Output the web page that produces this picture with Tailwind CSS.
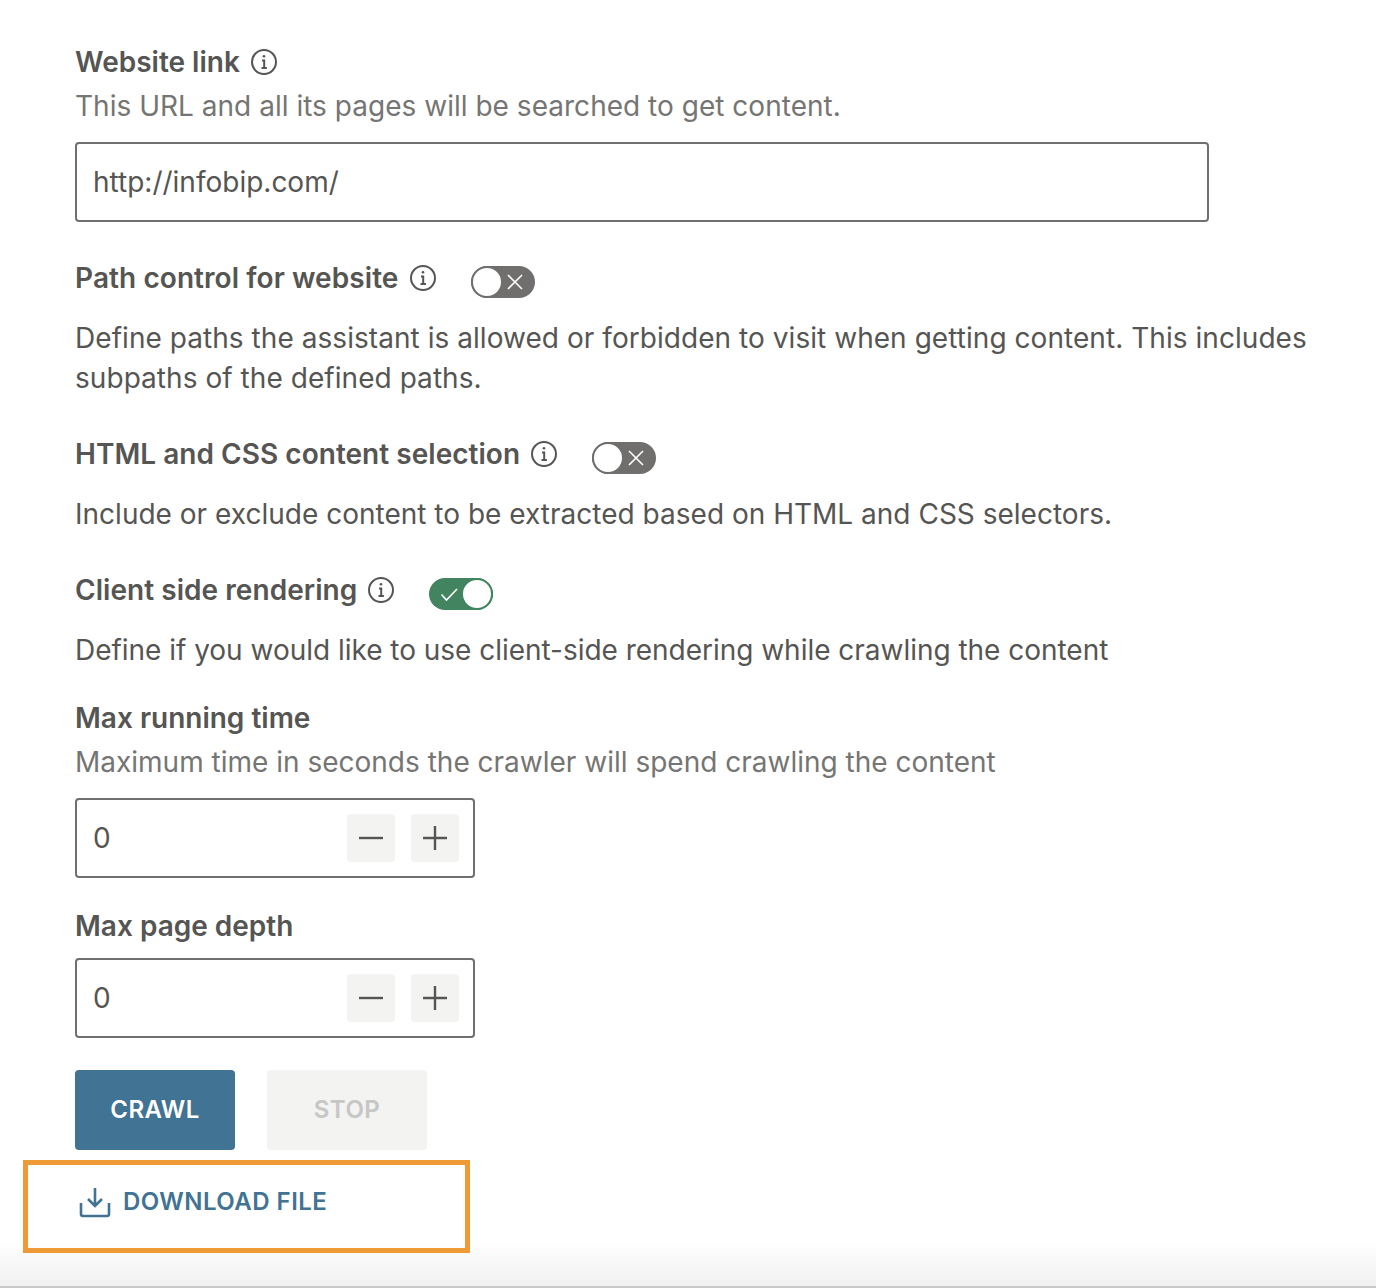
<!DOCTYPE html>
<html lang="en">
<head>
<meta charset="UTF-8" />
<title>Website crawler</title>
<script src="https://cdn.jsdelivr.net/npm/@tailwindcss/browser@4"></script>
</head>
<body class="bg-white">
<div class="relative h-[1288px] w-[1376px] overflow-hidden font-['Inter',sans-serif] text-[28px] leading-[40px] text-[#555553]">
  <main class="pl-[75px] pt-[42px] pr-[60px]">

    <!-- Website link -->
    <div class="flex h-10 items-center gap-[10px] font-semibold">
      Website link
      <svg class="h-7 w-7" viewBox="0 0 28 28" fill="none" stroke="currentColor" stroke-width="2"><circle cx="14" cy="14" r="12"/><path d="M12 12.5h2.2V20M11.5 20h5.4"/><circle cx="14" cy="8.3" r="1.3" fill="currentColor" stroke="none"/></svg>
    </div>
    <p class="mt-1 tracking-[0.02px] text-[#757573]">This URL and all its pages will be searched to get content.</p>
    <div class="mt-4 flex h-20 w-[1134px] items-center rounded-[4px] border-2 border-[#6f6f6d] px-4">http://infobip.com/</div>

    <!-- Path control -->
    <div class="mt-[36px] flex h-10 items-center font-semibold tracking-[0.07px]">
      Path control for website
      <svg class="ml-[11px] h-7 w-7" viewBox="0 0 28 28" fill="none" stroke="currentColor" stroke-width="2"><circle cx="14" cy="14" r="12"/><path d="M12 12.5h2.2V20M11.5 20h5.4"/><circle cx="14" cy="8.3" r="1.3" fill="currentColor" stroke="none"/></svg>
      <span class="relative top-[4px] ml-[34px] flex h-8 w-16 items-center justify-between rounded-full bg-[#706f6d]">
        <span class="h-8 w-8 rounded-full border-2 border-[#706f6d] bg-white"></span>
        <svg class="mr-[11px] h-[18px] w-[18px]" viewBox="0 0 18 18" stroke="#fff" stroke-width="1.6"><path d="M2 2l14 14M16 2L2 16"/></svg>
      </span>
    </div>
    <p class="mt-[20px] tracking-[0.05px]">Define paths the assistant is allowed or forbidden to visit when getting content. This includes subpaths of the defined paths.</p>

    <!-- HTML and CSS -->
    <div class="mt-[36px] flex h-10 items-center font-semibold tracking-[0.03px]">
      HTML and CSS content selection
      <svg class="ml-[10px] h-7 w-7" viewBox="0 0 28 28" fill="none" stroke="currentColor" stroke-width="2"><circle cx="14" cy="14" r="12"/><path d="M12 12.5h2.2V20M11.5 20h5.4"/><circle cx="14" cy="8.3" r="1.3" fill="currentColor" stroke="none"/></svg>
      <span class="relative top-[4px] ml-[34px] flex h-8 w-16 items-center justify-between rounded-full bg-[#706f6d]">
        <span class="h-8 w-8 rounded-full border-2 border-[#706f6d] bg-white"></span>
        <svg class="mr-[11px] h-[18px] w-[18px]" viewBox="0 0 18 18" stroke="#fff" stroke-width="1.6"><path d="M2 2l14 14M16 2L2 16"/></svg>
      </span>
    </div>
    <p class="mt-[20px] tracking-[0.01px]">Include or exclude content to be extracted based on HTML and CSS selectors.</p>

    <!-- Client side rendering -->
    <div class="mt-[36px] flex h-10 items-center font-semibold tracking-[0.05px]">
      Client side rendering
      <svg class="ml-[10px] h-7 w-7" viewBox="0 0 28 28" fill="none" stroke="currentColor" stroke-width="2"><circle cx="14" cy="14" r="12"/><path d="M12 12.5h2.2V20M11.5 20h5.4"/><circle cx="14" cy="8.3" r="1.3" fill="currentColor" stroke="none"/></svg>
      <span class="relative top-[4px] ml-[34px] flex h-8 w-16 items-center justify-between rounded-full bg-[#41845f]">
        <svg class="ml-[11px] h-[18px] w-[18px]" viewBox="0 0 18 18" fill="none" stroke="#fff" stroke-width="1.6"><path d="M1.5 9.5l5 5.5L17 4"/></svg>
        <span class="h-8 w-8 rounded-full border-2 border-[#41845f] bg-white"></span>
      </span>
    </div>
    <p class="mt-[20px] tracking-[-0.025px]">Define if you would like to use client-side rendering while crawling the content</p>

    <!-- Max running time -->
    <div class="mt-[28px] h-10 font-semibold">Max running time</div>
    <p class="mt-1 text-[#757573]">Maximum time in seconds the crawler will spend crawling the content</p>
    <div class="mt-4 flex h-20 w-[400px] items-center rounded-[4px] border-2 border-[#6f6f6d] pl-4 pr-[14px]">
      <span class="flex-1">0</span>
      <span class="flex h-12 w-12 items-center justify-center rounded-[4px] bg-[#f3f3f2]"><svg class="h-6 w-6" viewBox="0 0 24 24" stroke="#555553" stroke-width="2.4"><path d="M0 12h24"/></svg></span>
      <span class="ml-4 flex h-12 w-12 items-center justify-center rounded-[4px] bg-[#f3f3f2]"><svg class="h-6 w-6" viewBox="0 0 24 24" stroke="#555553" stroke-width="2.4"><path d="M0 12h24M12 0v24"/></svg></span>
    </div>

    <!-- Max page depth -->
    <div class="mt-[28px] h-10 font-semibold">Max page depth</div>
    <div class="mt-[12px] flex h-20 w-[400px] items-center rounded-[4px] border-2 border-[#6f6f6d] pl-4 pr-[14px]">
      <span class="flex-1">0</span>
      <span class="flex h-12 w-12 items-center justify-center rounded-[4px] bg-[#f3f3f2]"><svg class="h-6 w-6" viewBox="0 0 24 24" stroke="#555553" stroke-width="2.4"><path d="M0 12h24"/></svg></span>
      <span class="ml-4 flex h-12 w-12 items-center justify-center rounded-[4px] bg-[#f3f3f2]"><svg class="h-6 w-6" viewBox="0 0 24 24" stroke="#555553" stroke-width="2.4"><path d="M0 12h24M12 0v24"/></svg></span>
    </div>

    <!-- Actions -->
    <div class="mt-8 flex gap-8 text-[24px] font-semibold tracking-[0.45px]">
      <button class="h-20 w-40 rounded-[4px] bg-[#417394] text-white">CRAWL</button>
      <button class="h-20 w-40 rounded-[4px] bg-[#f3f3f2] text-[#c6c6c5]">STOP</button>
    </div>
    <button class="mt-[32px] flex items-center gap-[12px] pl-[4px] text-[24px] font-semibold tracking-[0.47px] text-[#417394]">
      <svg class="h-8 w-8" viewBox="0 0 32 32" fill="none" stroke="currentColor" stroke-width="2.6"><path d="M16 2v18M9 13l7 7 7-7M2 17v11a2 2 0 0 0 2 2h24a2 2 0 0 0 2-2V17" /></svg>
      DOWNLOAD FILE
    </button>
  </main>

  <!-- bottom fade + annotation box -->
  <div class="absolute bottom-0 left-0 h-12 w-full border-b-2 border-[#c9c9c9] bg-gradient-to-b from-white to-[#f1f1f1]"></div>
  <div class="absolute left-[23px] top-[1160px] h-[93px] w-[447px] border-[5px] border-[#f09a37]"></div>
</div>
</body>
</html>
